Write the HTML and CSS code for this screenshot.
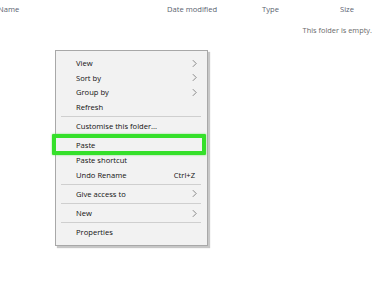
FILE: index.html
```html
<!DOCTYPE html>
<html>
<head>
<meta charset="utf-8">
<link rel="stylesheet" href="styles.css">
</head>
<body>
<div class="explorer">
  <div class="header">
    <div class="col col-name">Name<span class="sort">^</span></div>
    <div class="col col-date">Date modified</div>
    <div class="col col-type">Type</div>
    <div class="col col-size">Size</div>
  </div>
  <div class="empty">This folder is empty.</div>
</div>

<div class="menu">
  <div class="item"><span class="label">View</span><svg class="chev" viewBox="0 0 6 10"><polyline points="1,1 5,5 1,9"/></svg></div>
  <div class="item"><span class="label">Sort by</span><svg class="chev" viewBox="0 0 6 10"><polyline points="1,1 5,5 1,9"/></svg></div>
  <div class="item"><span class="label">Group by</span><svg class="chev" viewBox="0 0 6 10"><polyline points="1,1 5,5 1,9"/></svg></div>
  <div class="item"><span class="label">Refresh</span></div>
  <div class="sep"></div>
  <div class="item"><span class="label">Customise this folder...</span></div>
  <div class="sep"></div>
  <div class="item"><span class="label">Paste</span></div>
  <div class="item"><span class="label">Paste shortcut</span></div>
  <div class="item"><span class="label">Undo Rename</span><span class="key">Ctrl+Z</span></div>
  <div class="sep"></div>
  <div class="item"><span class="label">Give access to</span><svg class="chev" viewBox="0 0 6 10"><polyline points="1,1 5,5 1,9"/></svg></div>
  <div class="sep"></div>
  <div class="item"><span class="label">New</span><svg class="chev" viewBox="0 0 6 10"><polyline points="1,1 5,5 1,9"/></svg></div>
  <div class="sep"></div>
  <div class="item"><span class="label">Properties</span></div>
</div>
<div class="highlight"></div>
</body>
</html>
```

FILE: styles.css
```css
html, body {
  margin: 0;
  padding: 0;
  background: #ffffff;
  width: 375px;
  height: 300px;
  overflow: hidden;
  font-family: "Open Sans", "Noto Sans", sans-serif;
}

.explorer {
  display: flex;
  flex-direction: column;
}

.header {
  display: grid;
  grid-template-columns: 167px 95px 78px 1fr;
  height: 18px;
  align-items: center;
  font-size: 7.6px;
  color: #5a6270;
}

.col-name {
  margin-left: -2px;
  position: relative;
}

.sort {
  position: absolute;
  left: 77px;
  top: -9px;
  font-size: 7px;
  color: #b8b8b8;
}

.empty {
  align-self: flex-end;
  margin-top: 7px;
  margin-right: 3px;
  font-size: 7.4px;
  color: #6a6a6a;
}

.menu {
  position: absolute;
  left: 55px;
  top: 50px;
  width: 151px;
  padding: 5px 0 5px 0;
  background: #f2f2f2;
  border: 1px solid #a8a8a8;
  box-shadow: 2px 2px 1px rgba(0, 0, 0, 0.22);
  display: flex;
  flex-direction: column;
  font-size: 7.6px;
  color: #111;
}

.item {
  height: 14.6px;
  display: flex;
  align-items: center;
  padding-left: 20px;
  padding-right: 10px;
}

.label {
  flex: 1;
  white-space: nowrap;
}

.key {
  margin-right: 2px;
}

.chev {
  width: 5px;
  height: 9px;
  fill: none;
  stroke: #555;
  stroke-width: 0.8;
}

.sep {
  height: 4.6px;
  display: flex;
  align-items: center;
  padding: 0 6px 0 5px;
}

.sep::before {
  content: "";
  flex: 1;
  height: 1px;
  background: #cfcfcf;
}

.highlight {
  position: absolute;
  left: 52px;
  top: 134px;
  width: 146px;
  height: 13px;
  border: 4px solid #35e02a;
  box-shadow: 0 0 2px rgba(53, 224, 42, 0.7);
  border-radius: 1px;
}
```
